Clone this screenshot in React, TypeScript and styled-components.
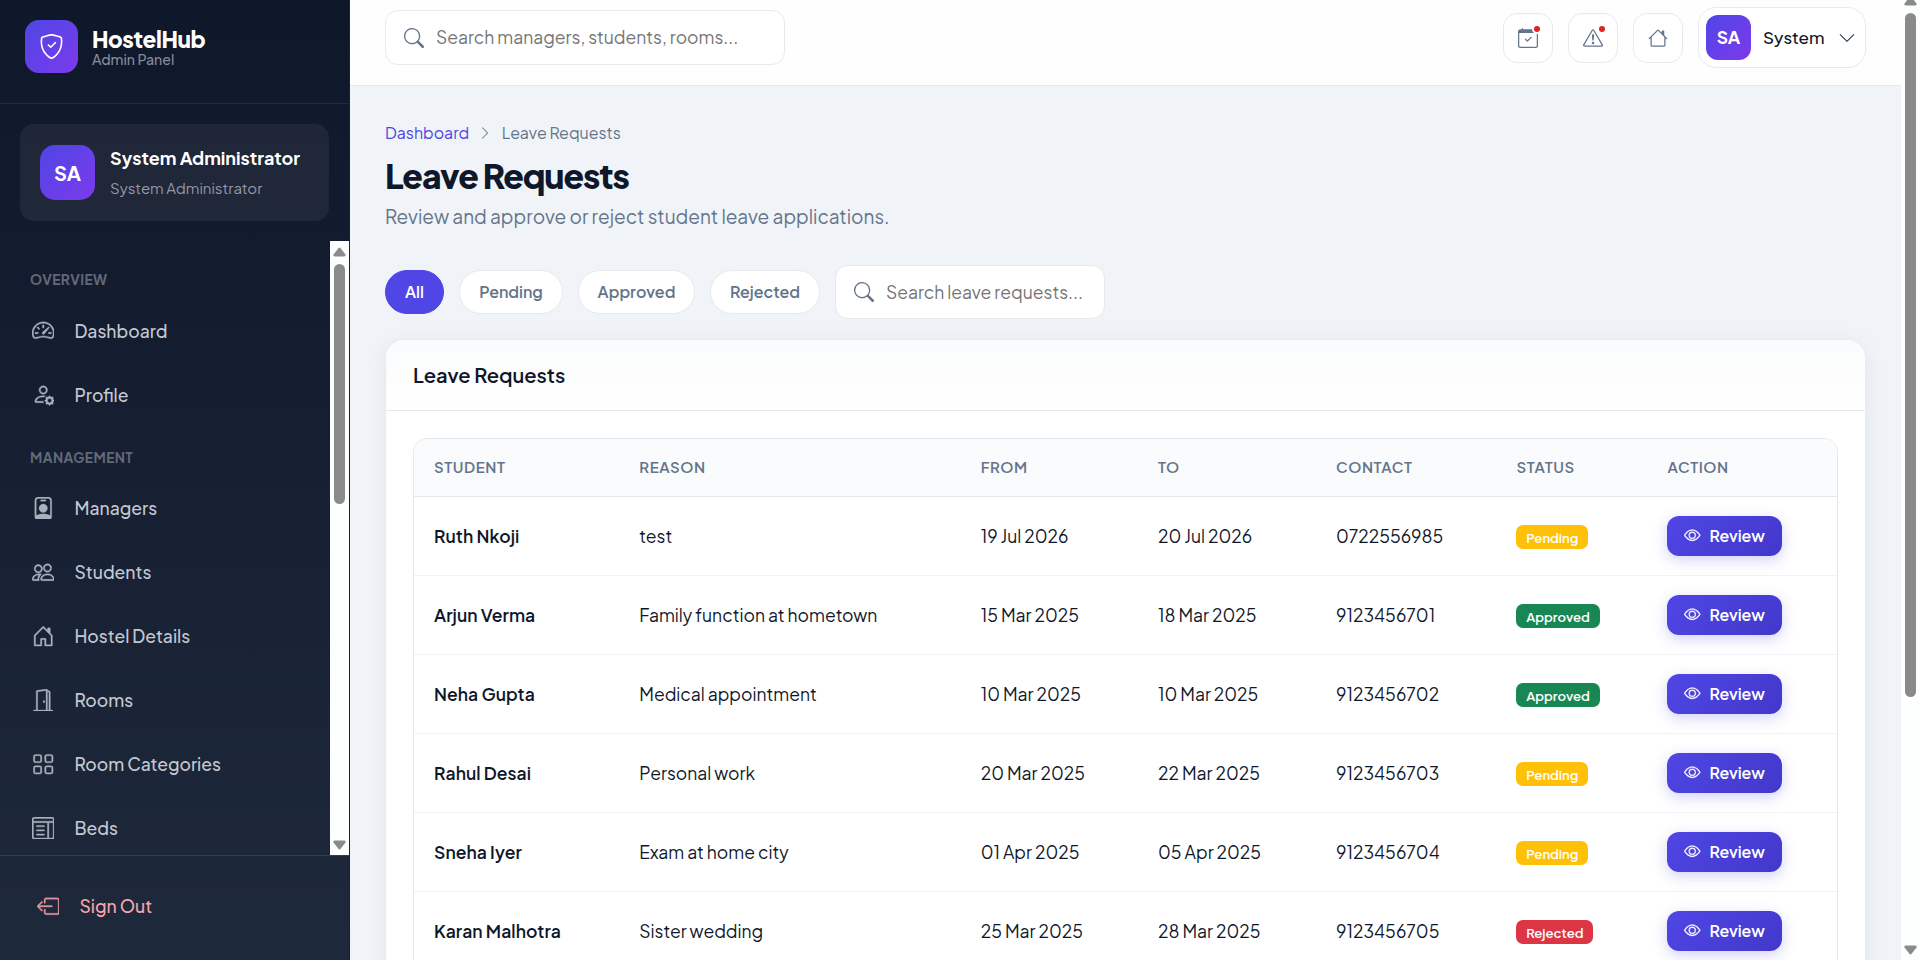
import React from 'react';
import styled, { createGlobalStyle } from 'styled-components';
import type { IconType } from 'react-icons';
import {
  BsShieldCheck, BsSpeedometer2, BsPersonGear, BsPersonBadge, BsPeople, BsHouseDoor, BsDoorOpen, BsGrid,
  BsLayoutTextWindow, BsBoxArrowLeft, BsSearch, BsCalendarCheck, BsExclamationTriangle, BsHouse, BsChevronDown,
  BsChevronRight, BsEye,
} from 'react-icons/bs';

const GlobalStyle = createGlobalStyle`
  *, *::before, *::after { box-sizing: border-box; }
  body {
    margin: 0;
    overflow: hidden;
    font-family: "Plus Jakarta Sans", Inter, "Liberation Sans", sans-serif;
    color: #0f172a;
    background: #f0f4f8;
  }
  h1, h2, p { margin: 0; }
  button, input { font-family: inherit; }
`;

const Shell = styled.div`
  display: flex;
  height: 960px;
  overflow: hidden;
`;

/* Sidebar */

const Sidebar = styled.aside`
  display: flex;
  flex-direction: column;
  flex: 0 0 350px;
  border-right: 1px solid #1a2033;
  background: linear-gradient(180deg, #0f172a 0%, #1e293b 100%);
`;

const Brand = styled.div`
  display: flex;
  gap: 14px;
  height: 104px;
  padding: 20px 25px;
  border-bottom: 1px solid rgba(255, 255, 255, 0.08);
`;

const BrandMark = styled.div`
  display: flex;
  align-items: center;
  justify-content: center;
  width: 53px;
  height: 53px;
  border-radius: 14px;
  font-size: 25px;
  color: #fff;
  background: linear-gradient(135deg, #4f46e5, #7c3aed);
`;

const BrandText = styled.div`
  display: flex;
  flex-direction: column;
  padding-top: 5px;
`;

const BrandName = styled.div`
  font-size: 22.5px;
  font-weight: 800;
  line-height: 28px;
  letter-spacing: -0.4px;
  color: #fff;
`;

const BrandSub = styled.div`
  font-size: 14.1px;
  font-weight: 500;
  line-height: 13px;
  color: #858b99;
`;

const ProfileCard = styled.div`
  display: flex;
  align-items: center;
  gap: 15px;
  height: 97px;
  margin: 20px 20px 20px;
  padding: 0 20px;
  border-radius: 14px;
  background: rgba(255, 255, 255, 0.06);
`;

const Avatar = styled.div<{ $size: number; $font: number }>`
  display: flex;
  flex: none;
  align-items: center;
  justify-content: center;
  width: ${(p) => p.$size}px;
  height: ${(p) => p.$size}px;
  padding-bottom: 1px;
  border-radius: ${(p) => (p.$size > 50 ? 15 : 12)}px;
  font-size: ${(p) => p.$font}px;
  font-weight: 700;
  color: #fff;
  background: linear-gradient(135deg, #4f46e5, #7c3aed);
`;

const ProfileName = styled.div`
  font-size: 18px;
  font-weight: 700;
  line-height: 30px;
  white-space: nowrap;
  color: #fff;
`;

const ProfileRole = styled.div`
  font-size: 15px;
  line-height: 30px;
  color: #9499a5;
`;

const NavArea = styled.div`
  display: flex;
  flex: 1;
  min-height: 0;
`;

const Nav = styled.nav`
  flex: 1;
  padding-top: 8px;
  overflow: hidden;
`;

const NavLabel = styled.div`
  height: 49.5px;
  padding: 12px 30px 0;
  font-size: 13.75px;
  font-weight: 700;
  line-height: 38.5px;
  letter-spacing: 0.42px;
  color: #626979;
`;

const NavItem = styled.a<{ $danger?: boolean }>`
  display: flex;
  align-items: center;
  gap: 20.5px;
  height: 64px;
  padding-left: ${(p) => (p.$danger ? 36.5 : 31.5)}px;
  font-size: 17.5px;
  font-weight: 500;
  color: ${(p) => (p.$danger ? '#f8a5ac' : '#c3c8d1')};

  svg {
    width: 22.5px;
    height: 22.5px;
    stroke: currentColor;
    stroke-width: 0.25;
    color: ${(p) => (p.$danger ? '#e0939c' : '#abb1bd')};
  }
`;

const SideFooter = styled.div`
  height: 105px;
  padding-top: 18px;
  border-top: 1px solid rgba(255, 255, 255, 0.1);
`;

/* Scroll bars */

const Track = styled.div<{ $width: number }>`
  display: flex;
  flex: none;
  flex-direction: column;
  align-items: center;
  width: ${(p) => p.$width}px;
  background: #fdfefe;
  overflow: hidden;
`;

const Arrow = styled.svg<{ $top?: number }>`
  display: block;
  flex: none;
  width: 13px;
  height: 10px;
  margin-top: ${(p) => p.$top ?? 0}px;
  fill: #8a8a8a;
`;

const Thumb = styled.div<{ $height: number }>`
  flex: none;
  width: 11px;
  height: ${(p) => p.$height}px;
  margin: 7px 0 auto;
  border-radius: 6px;
  background: #8a8a8a;
`;

const ArrowDown = styled(Arrow)`
  margin-bottom: 5px;
  transform: rotate(180deg);
`;

const arrowPath = 'M5.4 1.2Q6.5 0 7.6 1.2L12.5 7.5Q13.2 9.5 11 9.5H2Q-.2 9.5 .5 7.5Z';

function ScrollBar(p: { width: number; top: number; thumb: number }) {
  return (
    <Track $width={p.width}>
      <Arrow $top={p.top} viewBox="0 0 13 10"><path d={arrowPath} /></Arrow>
      <Thumb $height={p.thumb} />
      <ArrowDown viewBox="0 0 13 10"><path d={arrowPath} /></ArrowDown>
    </Track>
  );
}

/* Top bar */

const Page = styled.div`
  display: flex;
  flex: 1;
  flex-direction: column;
  min-width: 0;
`;

const TopBar = styled.header`
  display: flex;
  align-items: flex-start;
  flex: 0 0 86px;
  padding: 0 35px;
  border-bottom: 1px solid #e2e8ec;
  background: #fefefe;
`;

const SearchBox = styled.label<{ $width: number; $height: number; $top?: number }>`
  display: flex;
  align-items: center;
  gap: 12px;
  width: ${(p) => p.$width}px;
  height: ${(p) => p.$height}px;
  margin-top: ${(p) => p.$top ?? 0}px;
  padding: 0 8px 0 18px;
  border: 1px solid #e6eaee;
  border-radius: 13px;
  background: #fff;

  svg {
    flex: none;
    width: 20px;
    height: 20px;
    color: #64748b;
  }
`;

const SearchInput = styled.input`
  flex: 1;
  min-width: 0;
  padding: 0 0 1px;
  border: 0;
  outline: 0;
  font-size: 17.5px;
  background: transparent;

  &::placeholder { color: #757575; opacity: 1; }
`;

const Actions = styled.div`
  display: flex;
  gap: 15px;
  margin-left: auto;
`;

const IconButton = styled.button`
  position: relative;
  display: flex;
  align-items: center;
  justify-content: center;
  width: 50px;
  height: 50px;
  margin-top: 13px;
  padding: 0;
  border: 1px solid #e6eaee;
  border-radius: 14px;
  color: #64748b;
  background: #fff;

  svg { width: 20px; height: 20px; }
`;

const Dot = styled.span`
  position: absolute;
  top: 10px;
  right: 10px;
  width: 10px;
  height: 10px;
  border: 2px solid #fff;
  border-radius: 50%;
  background: #dc2626;
`;

const UserChip = styled.button`
  display: flex;
  align-items: center;
  width: 168px;
  height: 61px;
  margin-top: 7px;
  padding: 0 9.5px 0 7px;
  border: 1px solid #e6eaee;
  border-radius: 18px;
  color: #0f172a;
  background: #fff;

  svg { width: 18px; height: 18px; margin-left: auto; color: #334155; }
`;

const UserName = styled.span`
  margin-left: 12px;
  padding-bottom: 1px;
  font-size: 17px;
  font-weight: 500;
`;

/* Page head */

const Main = styled.main`
  padding: 34px 35px 0;
`;

const Crumbs = styled.div`
  display: flex;
  align-items: center;
  height: 25px;
  font-size: 15.95px;
  color: #64748b;

  a { color: #4f46e5; }
  svg { width: 14px; height: 14px; margin: 0 9.5px 0 9px; }
`;

const Title = styled.h1`
  margin-top: 10px;
  font-size: 33.75px;
  font-weight: 800;
  line-height: 40px;
  letter-spacing: -1.1px;
`;

const Subtitle = styled.p`
  margin-top: 7px;
  font-size: 19px;
  line-height: 28px;
  color: #64748b;
`;

const Filters = styled.div`
  display: flex;
  align-items: center;
  gap: 15px;
  height: 54px;
  margin-top: 35px;
`;

const Pill = styled.button<{ $width: number; $active?: boolean }>`
  width: ${(p) => p.$width}px;
  height: 44px;
  padding: 0 0 1px;
  border: 1px solid ${(p) => (p.$active ? '#4f46e5' : '#e6eaee')};
  border-radius: 22px;
  font-size: 16px;
  font-weight: 600;
  color: ${(p) => (p.$active ? '#fff' : '#64748b')};
  background: ${(p) => (p.$active ? '#4f46e5' : '#fff')};
`;

/* Table card */

const Card = styled.section`
  height: 900px;
  margin-top: 20px;
  border: 1px solid #e8ecf1;
  border-radius: 19px;
  background: #fff;
  box-shadow: 0 4px 24px rgba(15, 23, 42, 0.06);
`;

const CardHead = styled.div`
  height: 71px;
  padding: 0 27px;
  border-bottom: 1px solid #e5e8ec;
  border-radius: 18px 18px 0 0;
  background: linear-gradient(180deg, #fafbfc, #fff);
`;

const CardTitle = styled.h2`
  font-size: 20.1px;
  font-weight: 600;
  line-height: 70px;
`;

const TableFrame = styled.div`
  margin: 27px 27px 0;
  border: 1px solid #e4e8ec;
  border-radius: 14px;
  overflow: hidden;
`;

const TableRow = styled.div<{ $head?: boolean }>`
  display: grid;
  grid-template-columns: 205.3px 341.4px 177.3px 178px 180.5px 151px 1fr;
  align-items: center;
  height: ${(p) => (p.$head ? 58 : 79)}px;
  padding-left: 20px;
  border-bottom: 1px solid ${(p) => (p.$head ? '#e4e8ec' : '#f1f4f7')};
  background: ${(p) => (p.$head ? '#f9fbfc' : '#fff')};
`;

const HeadCell = styled.div`
  padding-bottom: 2px;
  font-size: 15px;
  font-weight: 600;
  letter-spacing: 0.55px;
  color: #64748b;
`;

const Cell = styled.div<{ $strong?: boolean }>`
  font-size: 17.5px;
  font-weight: ${(p) => (p.$strong ? 600 : 400)};
  letter-spacing: ${(p) => (p.$strong ? 0.06 : 0)}px;
  white-space: nowrap;
`;

type Status = 'Pending' | 'Approved' | 'Rejected';

const statusColors: Record<Status, string> = { Pending: '#ffc107', Approved: '#198754', Rejected: '#dc3545' };

const Badge = styled.span<{ $status: Status }>`
  display: inline-block;
  height: 24px;
  margin-top: 2px;
  padding: 0 9.7px;
  border-radius: 7px;
  font-size: 13.1px;
  font-weight: 600;
  line-height: 26px;
  letter-spacing: 0;
  vertical-align: top;
  color: #fff;
  background: ${(p) => statusColors[p.$status]};
`;

const ReviewButton = styled.button`
  display: flex;
  align-items: center;
  gap: 8.5px;
  width: 115px;
  height: 40px;
  padding: 0 0 1px 17px;
  border: 0;
  border-radius: 12px;
  font-size: 15.9px;
  font-weight: 600;
  color: #fff;
  background: linear-gradient(135deg, #4f46e5, #4338ca);
  box-shadow: 0 4px 14px rgba(79, 70, 229, 0.25);

  svg { width: 16.5px; height: 16.5px; stroke: currentColor; stroke-width: 0.25; }
`;

const overview: [IconType, string][] = [[BsSpeedometer2, 'Dashboard'], [BsPersonGear, 'Profile']];
const management: [IconType, string][] = [
  [BsPersonBadge, 'Managers'],
  [BsPeople, 'Students'],
  [BsHouseDoor, 'Hostel Details'],
  [BsDoorOpen, 'Rooms'],
  [BsGrid, 'Room Categories'],
  [BsLayoutTextWindow, 'Beds'],
];

const requests: { student: string; reason: string; from: string; to: string; contact: string; status: Status }[] = [
  { student: 'Ruth Nkoji', reason: 'test', from: '19 Jul 2026', to: '20 Jul 2026', contact: '0722556985', status: 'Pending' },
  { student: 'Arjun Verma', reason: 'Family function at hometown', from: '15 Mar 2025', to: '18 Mar 2025', contact: '9123456701', status: 'Approved' },
  { student: 'Neha Gupta', reason: 'Medical appointment', from: '10 Mar 2025', to: '10 Mar 2025', contact: '9123456702', status: 'Approved' },
  { student: 'Rahul Desai', reason: 'Personal work', from: '20 Mar 2025', to: '22 Mar 2025', contact: '9123456703', status: 'Pending' },
  { student: 'Sneha Iyer', reason: 'Exam at home city', from: '01 Apr 2025', to: '05 Apr 2025', contact: '9123456704', status: 'Pending' },
  { student: 'Karan Malhotra', reason: 'Sister wedding', from: '25 Mar 2025', to: '28 Mar 2025', contact: '9123456705', status: 'Rejected' },
];

const columns = ['STUDENT', 'REASON', 'FROM', 'TO', 'CONTACT', 'STATUS', 'ACTION'];

export default function App() {
  return (
    <>
      <GlobalStyle />
      <Shell>
        <Sidebar>
          <Brand>
            <BrandMark><BsShieldCheck /></BrandMark>
            <BrandText>
              <BrandName>HostelHub</BrandName>
              <BrandSub>Admin Panel</BrandSub>
            </BrandText>
          </Brand>
          <ProfileCard>
            <Avatar $size={55} $font={20}>SA</Avatar>
            <div>
              <ProfileName>System Administrator</ProfileName>
              <ProfileRole>System Administrator</ProfileRole>
            </div>
          </ProfileCard>
          <NavArea>
            <Nav>
              <NavLabel>OVERVIEW</NavLabel>
              {overview.map(([Icon, label]) => <NavItem key={label}><Icon />{label}</NavItem>)}
              <NavLabel>MANAGEMENT</NavLabel>
              {management.map(([Icon, label]) => <NavItem key={label}><Icon />{label}</NavItem>)}
            </Nav>
            <ScrollBar width={19} top={6} thumb={240} />
          </NavArea>
          <SideFooter>
            <NavItem $danger><BsBoxArrowLeft />Sign Out</NavItem>
          </SideFooter>
        </Sidebar>
        <Page>
          <TopBar>
            <SearchBox $width={400} $height={55} $top={10}>
              <BsSearch />
              <SearchInput placeholder="Search managers, students, rooms..." />
            </SearchBox>
            <Actions>
              <IconButton><BsCalendarCheck /><Dot /></IconButton>
              <IconButton><BsExclamationTriangle /><Dot /></IconButton>
              <IconButton><BsHouse /></IconButton>
              <UserChip>
                <Avatar $size={45} $font={17.5}>SA</Avatar>
                <UserName>System</UserName>
                <BsChevronDown />
              </UserChip>
            </Actions>
          </TopBar>
          <Main>
            <Crumbs><a>Dashboard</a><BsChevronRight /><span>Leave Requests</span></Crumbs>
            <Title>Leave Requests</Title>
            <Subtitle>Review and approve or reject student leave applications.</Subtitle>
            <Filters>
              <Pill $width={59} $active>All</Pill>
              <Pill $width={104}>Pending</Pill>
              <Pill $width={117}>Approved</Pill>
              <Pill $width={110}>Rejected</Pill>
              <SearchBox $width={270} $height={54}>
                <BsSearch />
                <SearchInput placeholder="Search leave requests..." />
              </SearchBox>
            </Filters>
            <Card>
              <CardHead><CardTitle>Leave Requests</CardTitle></CardHead>
              <TableFrame>
                <TableRow $head>
                  {columns.map((c) => <HeadCell key={c}>{c}</HeadCell>)}
                </TableRow>
                {requests.map((r) => (
                  <TableRow key={r.student}>
                    <Cell $strong>{r.student}</Cell>
                    <Cell>{r.reason}</Cell>
                    <Cell>{r.from}</Cell>
                    <Cell>{r.to}</Cell>
                    <Cell>{r.contact}</Cell>
                    <Cell><Badge $status={r.status}>{r.status}</Badge></Cell>
                    <Cell><ReviewButton><BsEye />Review</ReviewButton></Cell>
                  </TableRow>
                ))}
              </TableFrame>
            </Card>
          </Main>
        </Page>
        <ScrollBar width={18} top={-4} thumb={684} />
      </Shell>
    </>
  );
}
